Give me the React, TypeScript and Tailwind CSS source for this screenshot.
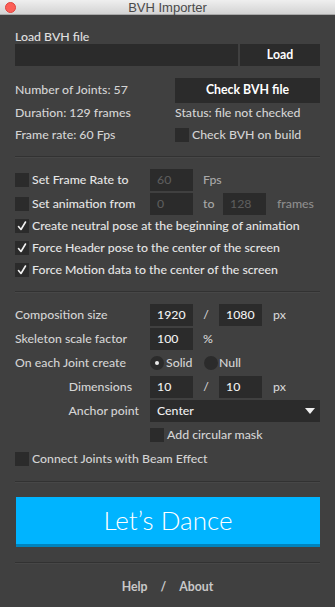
import React from 'react';

const Check = () => (
  <svg viewBox="0 0 14 14" className="w-[14px] h-[14px]">
    <path d="M3.5 7.5 L6 10.5 L10.5 3" fill="none" stroke="#f2f2f2" strokeWidth="1.6" strokeLinecap="round" strokeLinejoin="round" />
  </svg>
);

function Box({ checked = false }: { checked?: boolean }) {
  return (
    <span className="w-[14px] h-[14px] bg-[#2b2b2b] flex items-center justify-center shrink-0">
      {checked && <Check />}
    </span>
  );
}

function Field({ value, dim = false }: { value: string; dim?: boolean }) {
  return (
    <span className={`w-[43px] h-[22px] bg-[#2b2b2b] flex items-center pl-[7px] ${dim ? 'text-[#5c5c5c]' : 'text-[#f0f0f0]'}`}>
      {value}
    </span>
  );
}

function Divider() {
  return (
    <div>
      <div className="h-px bg-[#323232]" />
      <div className="h-px bg-[#474747]" />
    </div>
  );
}

export default function App() {
  return (
    <div
      className="w-[335px] h-[607px] bg-[#404040] text-[12.3px] text-[#d4d4d4] flex flex-col overflow-hidden"
      style={{ fontFamily: 'Lato, "Open Sans", sans-serif' }}
    >
      <div className="h-[15px] shrink-0 bg-gradient-to-b from-[#efefef] to-[#d3d3d3] border-b border-[#a8a8a8] relative flex items-center justify-center">
        <span className="absolute left-[5px] top-[2px] w-[11px] h-[11px] rounded-full bg-[#fc5f57] border border-[#e0443e]" />
        <span className="text-[13px] leading-none text-[#4a4a4a]" style={{ fontFamily: '"Liberation Sans", sans-serif' }}>
          BVH Importer
        </span>
      </div>

      <div className="px-[15px] flex flex-col font-medium">
        <div className="mt-[15px] leading-[14px] text-[#e0e0e0]">Load BVH file</div>
        <div className="flex gap-[2px] h-[22px]">
          <div className="flex-1 bg-[#2b2b2b]" />
          <button className="w-[80px] bg-[#2b2b2b] text-white font-bold">Load</button>
        </div>

        <div className="mt-[12px] grid grid-cols-[160px_1fr]">
          <div className="h-[25px] flex items-center">Number of Joints: 57</div>
          <button className="h-[25px] bg-[#2b2b2b] text-white font-bold">Check BVH file</button>
          <div className="h-[21px] flex items-center">Duration: 129 frames</div>
          <div className="h-[21px] flex items-center">Status: file not checked</div>
          <div className="h-[22px] flex items-center">Frame rate: 60 Fps</div>
          <div className="h-[22px] flex items-center gap-[3px]">
            <Box />
            Check BVH on build
          </div>
        </div>

        <div className="mt-[10px]">
          <Divider />
        </div>

        <div className="mt-[11px] flex flex-col gap-[2px]">
          <div className="h-[22px] flex items-center">
            <div className="w-[135px] flex items-center gap-[3px]">
              <Box />
              <span className="text-[#e6e6e6]">Set Frame Rate to</span>
            </div>
            <Field value="60" dim />
            <span className="ml-[10px] text-[#a8a8a8]">Fps</span>
          </div>
          <div className="h-[22px] flex items-center">
            <div className="w-[135px] flex items-center gap-[3px]">
              <Box />
              <span className="text-[#e6e6e6]">Set animation from</span>
            </div>
            <Field value="0" dim />
            <span className="w-[30px] pl-[10px] text-[#a8a8a8]">to</span>
            <Field value="128" dim />
            <span className="ml-[11px] text-[#8e8e8e]">frames</span>
          </div>
        </div>
        <div className="flex flex-col">
          {[
            'Create neutral pose at the beginning of animation',
            'Force Header pose to the center of the screen',
            'Force Motion data to the center of the screen',
          ].map((t) => (
            <div key={t} className="h-[22px] flex items-center gap-[3px] text-[#e6e6e6]">
              <Box checked />
              {t}
            </div>
          ))}
        </div>

        <div className="mt-[10px]">
          <Divider />
        </div>

        <div className="mt-[11px] flex flex-col gap-[2px]">
          <div className="h-[22px] flex items-center">
            <span className="w-[135px]">Composition size</span>
            <Field value="1920" />
            <span className="w-[26px] text-center">/</span>
            <Field value="1080" />
            <span className="ml-[11px]">px</span>
          </div>
          <div className="h-[22px] flex items-center">
            <span className="w-[135px]">Skeleton scale factor</span>
            <Field value="100" />
            <span className="ml-[10px]">%</span>
          </div>
          <div className="h-[22px] flex items-center">
            <span className="w-[135px]">On each Joint create</span>
            <span className="w-[14px] h-[14px] rounded-full bg-[#2b2b2b] flex items-center justify-center">
              <span className="w-[4px] h-[4px] rounded-full bg-[#eaeaea]" />
            </span>
            <span className="ml-[2px] w-[38px]">Solid</span>
            <span className="w-[14px] h-[14px] rounded-full bg-[#2b2b2b]" />
            <span className="ml-[1px]">Null</span>
          </div>
          <div className="h-[22px] flex items-center">
            <span className="w-[135px] text-right pr-[18px]">Dimensions</span>
            <Field value="10" />
            <span className="w-[26px] text-center">/</span>
            <Field value="10" />
            <span className="ml-[11px]">px</span>
          </div>
          <div className="h-[22px] flex items-center">
            <span className="w-[135px] text-right pr-[11px]">Anchor point</span>
            <div className="flex-1 h-[22px] bg-[#2b2b2b] flex items-center justify-between pl-[7px] pr-[5px] text-[#f0f0f0]">
              Center
              <svg viewBox="0 0 10 6" className="w-[10px] h-[6px]">
                <path d="M0 0 H10 L5 6 Z" fill="#eeeeee" />
              </svg>
            </div>
          </div>
          <div className="h-[22px] flex items-center pl-[135px] gap-[3px]">
            <Box />
            Add circular mask
          </div>
          <div className="h-[22px] flex items-center gap-[3px]">
            <Box />
            Connect Joints with Beam Effect
          </div>
        </div>

        <div className="mt-[11px]">
          <Divider />
        </div>

        <button className="mt-[14px] ml-px h-[50px] bg-[#00b4ff] border-b-[3px] border-[#0083bd] text-white text-[26px] font-light">
          Let’s Dance
        </button>

        <div className="mt-[15px]">
          <Divider />
        </div>

        <div className="mt-[16px] leading-[14px] flex justify-center gap-[13px] text-[#c8c8c8] font-bold">
          <span>Help</span>
          <span>/</span>
          <span>About</span>
        </div>
      </div>
    </div>
  );
}
